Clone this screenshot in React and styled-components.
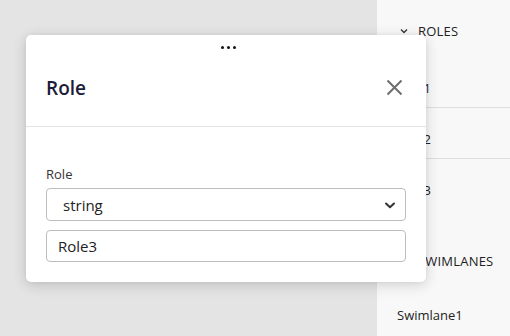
import React from "react";
import styled, { createGlobalStyle } from "styled-components";

const Global = createGlobalStyle`
  html, body { margin: 0; padding: 0; }
  body {
    font-family: "Open Sans", "Noto Sans", "Liberation Sans", sans-serif;
    background: #e4e4e4;
    -webkit-font-smoothing: antialiased;
  }
  * { box-sizing: border-box; }
`;

const Page = styled.div`
  position: relative;
  width: 510px;
  height: 336px;
  display: grid;
  grid-template-columns: 377px 1fr;
  overflow: hidden;
`;

const Canvas = styled.main`
  background: #e4e4e4;
`;

const Sidebar = styled.aside`
  background: #f8f8f8;
  padding-top: 19px;
  display: flex;
  flex-direction: column;
`;

const Section = styled.section`
  display: flex;
  flex-direction: column;
  margin-bottom: ${(p) => p.$gap || 0}px;
`;

const SectionHeader = styled.div`
  height: 24px;
  display: flex;
  align-items: center;
  gap: 10px;
  padding-left: 23px;
  font-size: 13px;
  line-height: 18px;
  color: #222;
  letter-spacing: 0.2px;
`;

const List = styled.ul`
  list-style: none;
  margin: ${(p) => p.$top}px 0 0;
  padding: 0;
`;

const Item = styled.li`
  padding: 22px 20px 10px;
  font-size: 13px;
  line-height: 18px;
  color: ${(p) => (p.$active ? "#262056" : "#222")};
  border-bottom: 1px solid #dedede;
  &:last-child { border-bottom: none; }
`;

const Modal = styled.div`
  position: absolute;
  left: 26px;
  top: 35px;
  width: 400px;
  background: #fff;
  border-radius: 5px;
  box-shadow: 0 3px 14px rgba(0, 0, 0, 0.16), 0 0 4px rgba(0, 0, 0, 0.05);
  display: flex;
  flex-direction: column;
`;

const Handle = styled.div`
  height: 24px;
  display: flex;
  align-items: center;
  justify-content: center;
  gap: 3px;
  padding-left: 4px;
`;

const Dot = styled.span`
  width: 3px;
  height: 3px;
  border-radius: 50%;
  background: #111;
`;

const Header = styled.header`
  height: 68px;
  padding: 15px 18px 0 20px;
  display: flex;
  align-items: flex-start;
  justify-content: space-between;
  border-bottom: 1px solid #e3e3e3;
`;

const Title = styled.h2`
  margin: 0;
  font-size: 19px;
  line-height: 28px;
  font-weight: 600;
  color: #1c1b38;
`;

const CloseButton = styled.button`
  width: 28px;
  height: 26px;
  padding: 0;
  border: none;
  background: transparent;
  display: flex;
  align-items: center;
  justify-content: center;
  color: #6e6e6e;
  cursor: pointer;
`;

const Body = styled.div`
  padding: 38px 20px 20px;
  display: flex;
  flex-direction: column;
`;

const Label = styled.label`
  font-size: 13px;
  line-height: 18px;
  color: #333;
  margin-bottom: 5px;
`;

const Field = styled.div`
  height: ${(p) => p.$h}px;
  border: 1px solid #bdbdbd;
  border-radius: 4px;
  display: flex;
  align-items: center;
  justify-content: space-between;
  padding: 0 9px 0 ${(p) => p.$pl}px;
  margin-top: ${(p) => p.$mt || 0}px;
  font-size: 15px;
  color: #222;
  background: #fff;
`;

const Chevron = ({ size = 12, stroke = 2, color = "#333" }) => (
  <svg width={size} height={size} viewBox="0 0 12 12" fill="none">
    <path d="M2 4.5 L6 8.2 L10 4.5" stroke={color} strokeWidth={stroke} strokeLinecap="round" strokeLinejoin="round" />
  </svg>
);

const SmallChevron = () => (
  <svg width="8" height="6" viewBox="0 0 8 6" fill="none">
    <path d="M1 1.5 L4 4.5 L7 1.5" stroke="#333" strokeWidth="1.3" />
  </svg>
);

export default function App() {
  return (
    <>
      <Global />
      <Page>
        <Canvas />
        <Sidebar>
          <Section $gap={40}>
            <SectionHeader>
              <SmallChevron />
              ROLES
            </SectionHeader>
            <List $top={14}>
              <Item $active>Role1</Item>
              <Item>Role2</Item>
              <Item>Role3</Item>
            </List>
          </Section>
          <Section>
            <SectionHeader>
              <SmallChevron />
              SWIMLANES
            </SectionHeader>
            <List $top={11}>
              <Item>Swimlane1</Item>
            </List>
          </Section>
        </Sidebar>
        <Modal role="dialog">
          <Handle>
            <Dot />
            <Dot />
            <Dot />
          </Handle>
          <Header>
            <Title>Role</Title>
            <CloseButton aria-label="Close">
              <svg width="17" height="17" viewBox="0 0 17 17" fill="none">
                <path d="M1.5 1.5 L15.5 15.5 M15.5 1.5 L1.5 15.5" stroke="currentColor" strokeWidth="2" />
              </svg>
            </CloseButton>
          </Header>
          <Body>
            <Label>Role</Label>
            <Field $h={33} $pl={16} role="combobox">
              <span>string</span>
              <Chevron />
            </Field>
            <Field $h={32} $pl={11} $mt={9}>
              <span>Role3</span>
            </Field>
          </Body>
        </Modal>
      </Page>
    </>
  );
}
